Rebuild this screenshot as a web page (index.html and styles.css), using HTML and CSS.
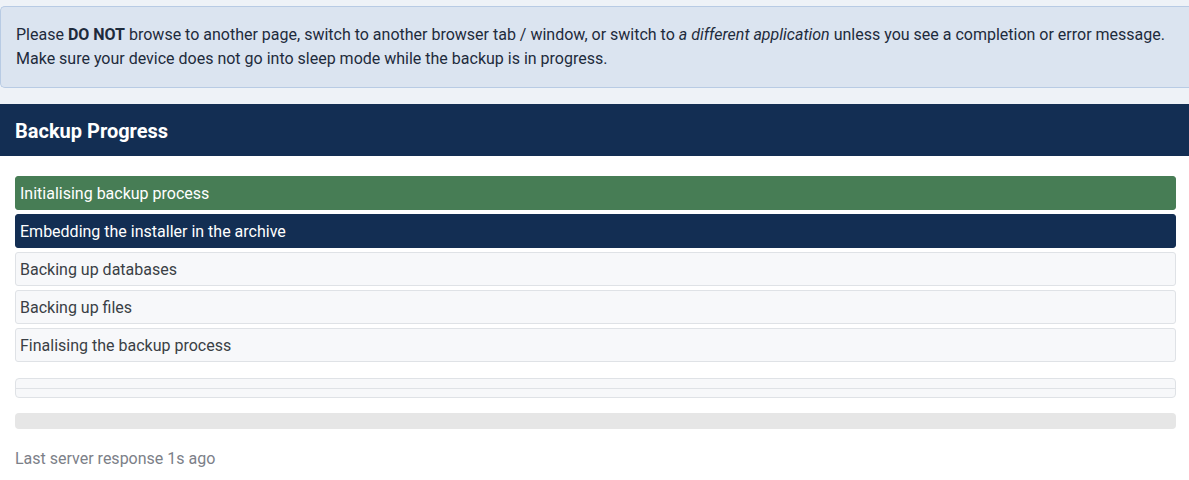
FILE: index.html
```html
<!DOCTYPE html>
<html lang="en">
  <head>
    <meta charset="UTF-8" />
    <meta name="viewport" content="width=device-width, initial-scale=1.0" />
    <title>Backup Progress</title>
    <link rel="stylesheet" href="styles.css">
  </head>
  <body>
    <div class="top-area">
      <div class="alert-info">
        Please <strong>DO NOT</strong> browse to another page, switch to another browser tab / window, or switch to <em>a different application</em> unless you see a completion or error message.<br />
        Make sure your device does not go into sleep mode while the backup is in progress.
      </div>
    </div>

    <div class="panel-header">
      <h2>Backup Progress</h2>
    </div>

    <div class="panel-body">
      <ul class="step-list">
        <li class="step done">Initialising backup process</li>
        <li class="step active">Embedding the installer in the archive</li>
        <li class="step">Backing up databases</li>
        <li class="step">Backing up files</li>
        <li class="step">Finalising the backup process</li>
      </ul>

      <div class="step-status">
        <div class="status-row"></div>
        <div class="status-row"></div>
      </div>

      <div class="progress">
        <div class="progress-bar" style="width: 0%"></div>
      </div>

      <p class="last-response">Last server response 1s ago</p>
    </div>
  </body>
</html>
```

FILE: styles.css
```css
* {
  margin: 0;
  padding: 0;
  box-sizing: border-box;
}

body {
  font-family: Roboto, "Liberation Sans", Arial, sans-serif;
  font-size: 16px;
  background: white;
  color: #333;
}

.top-area {
  background: #eef2f7;
  padding: 6px 0 16px 0;
}

.alert-info {
  background: #dbe4f0;
  border: 1px solid #b8cbe4;
  border-right: none;
  border-radius: 5px 0 0 5px;
  padding: 16px 15px;
  line-height: 24px;
  color: #1e2b3c;
}

.alert-info strong {
  font-weight: 700;
}

.panel-header {
  background: #132e53;
  height: 52px;
  display: flex;
  align-items: center;
  padding-left: 15px;
}

.panel-header h2 {
  color: white;
  font-size: 20px;
  font-weight: 700;
  padding-top: 2px;
}

.panel-body {
  padding: 20px 13px 0 15px;
}

.step-list {
  list-style: none;
}

.step {
  height: 34px;
  line-height: 33px;
  margin-bottom: 4px;
  padding: 0 4px;
  border: 1px solid #dfe2e6;
  border-radius: 3px;
  background: #f7f8fa;
  color: #3a3f45;
}

.step.done {
  background: #477d55;
  border-color: #477d55;
  color: white;
}

.step.active {
  background: #132e53;
  border-color: #132e53;
  color: white;
}

.step-status {
  margin-top: 16px;
  border: 1px solid #dfe2e6;
  border-radius: 4px;
  background: #f7f8fa;
}

.status-row {
  height: 9px;
}

.status-row + .status-row {
  border-top: 1px solid #dfe2e6;
}

.progress {
  margin-top: 15px;
  height: 16px;
  background: #e6e6e6;
  border-radius: 4px;
  overflow: hidden;
}

.progress-bar {
  height: 100%;
  background: #477d55;
}

.last-response {
  margin-top: 21px;
  color: #7c8088;
  line-height: 18px;
}
```
